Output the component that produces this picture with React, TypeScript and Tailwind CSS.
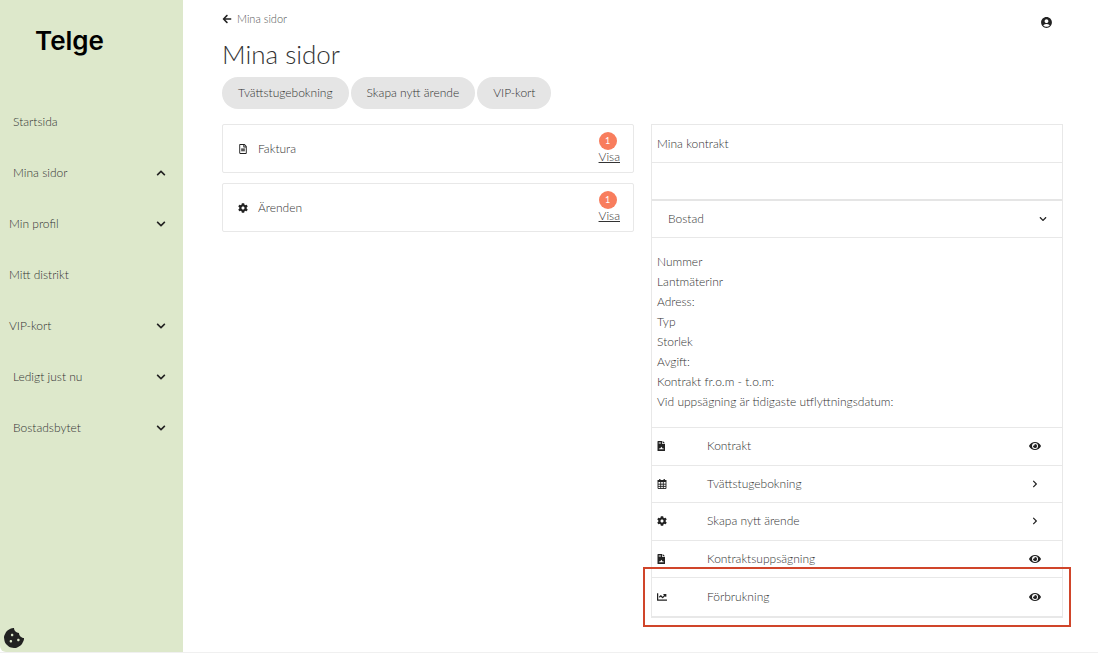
import {
  FaArrowLeft,
  FaChartLine,
  FaChevronDown,
  FaChevronRight,
  FaChevronUp,
  FaCog,
  FaCookieBite,
  FaEye,
  FaRegFileAlt,
} from 'react-icons/fa'
import { MdAccountCircle } from 'react-icons/md'
import type { ComponentType } from 'react'
import { clsx } from 'clsx'

type Icon = ComponentType<{ className?: string }>

interface NavItem {
  label: string
  indent?: boolean
  state?: 'open' | 'closed'
}

const navItems: NavItem[] = [
  { label: 'Startsida', indent: true },
  { label: 'Mina sidor', indent: true, state: 'open' },
  { label: 'Min profil', state: 'closed' },
  { label: 'Mitt distrikt' },
  { label: 'VIP-kort', state: 'closed' },
  { label: 'Ledigt just nu', indent: true, state: 'closed' },
  { label: 'Bostadsbytet', indent: true, state: 'closed' },
]

const shortcuts = ['Tvättstugebokning', 'Skapa nytt ärende', 'VIP-kort']

const details = [
  'Nummer',
  'Lantmäterinr',
  'Adress:',
  'Typ',
  'Storlek',
  'Avgift:',
  'Kontrakt fr.o.m - t.o.m:',
  'Vid uppsägning är tidigaste utflyttningsdatum:',
]

// Solid page with a folded corner, two text lines and a signature
function ContractIcon({ className }: { className?: string }) {
  return (
    <svg viewBox="0 0 10 10" fill="currentColor" className={className}>
      <path
        fillRule="evenodd"
        d="M.5 .6Q.5 0 1.1 0H5.1V2.9H8V9.4Q8 10 7.4 10H1.1Q.5 10 .5 9.4ZM1.7 1.2V1.8H3.9V1.2ZM1.7 2.5V3.1H3.9V2.5ZM1.9 8.2H6.7V7.5H5.5L4.5 5.8L3.1 7.5H1.9Z"
      />
      <path d="M5.7 0L8 2.3H5.7Z" />
    </svg>
  )
}

function CalendarIcon({ className }: { className?: string }) {
  return (
    <svg viewBox="0 0 10 10" fill="none" stroke="currentColor" className={className}>
      <path d="M.5 1H9.5V3H.5Z" fill="currentColor" stroke="none" />
      <path d="M2.8 0V2M7.2 0V2" strokeWidth="1.3" />
      <path d="M1 3V9.5H9V3M1 5.2H9M1 7.4H9M3.7 3V9.5M6.3 3V9.5" strokeWidth="0.9" />
    </svg>
  )
}

interface ActionRow {
  label: string
  icon: Icon
  action: 'view' | 'go'
}

const actionRows: ActionRow[] = [
  { label: 'Kontrakt', icon: ContractIcon, action: 'view' },
  { label: 'Tvättstugebokning', icon: CalendarIcon, action: 'go' },
  { label: 'Skapa nytt ärende', icon: FaCog, action: 'go' },
  { label: 'Kontraktsuppsägning', icon: ContractIcon, action: 'view' },
  { label: 'Förbrukning', icon: FaChartLine, action: 'view' },
]

function Sidebar() {
  return (
    <aside className="flex w-[183px] shrink-0 flex-col justify-between rounded-bl-md bg-[#dde8cb]">
      <div>
        <a href="#" className="flex h-24 items-start px-[35px] pt-[21px] font-['Inter'] text-[26px] leading-10 font-semibold text-black">
          Telge
        </a>
        <nav>
          {navItems.map(({ label, indent, state }) => (
            <a
              key={label}
              href="#"
              className={clsx('flex h-[51px] items-center justify-between pr-[17px]', indent ? 'pl-[13px]' : 'pl-[9px]')}
            >
              {label}
              {state === 'open' && <FaChevronUp className="size-[10px] text-[#222]" />}
              {state === 'closed' && <FaChevronDown className="size-[10px] text-[#222]" />}
            </a>
          ))}
        </nav>
      </div>
      <button aria-label="Cookies" className="mb-1 ml-1 size-5 text-[#222]">
        <FaCookieBite className="size-5" />
      </button>
    </aside>
  )
}

function SummaryCard({ icon: Icon, label, count }: { icon: Icon; label: string; count: number }) {
  return (
    <div className="flex h-[49px] items-center rounded-xs border border-[#e8e8e8] pr-[13px] pl-[14px]">
      <Icon className="h-[10px] w-3 text-[#222]" />
      <span className="ml-[9px] flex-1">{label}</span>
      <div className="flex flex-col pb-[2px]">
        <span className="flex size-[18px] items-center justify-center rounded-full bg-[#f87d5d] text-[9px] font-normal text-white">
          {count}
        </span>
        <a href="#" className="leading-[14px] underline">
          Visa
        </a>
      </div>
    </div>
  )
}

function ContractPanel() {
  return (
    <section className="border border-b-2 border-[#e8e8e8]">
      <h2 className="flex h-[38px] items-center border-b border-[#e8e8e8] px-[5px]">Mina kontrakt</h2>
      <div className="h-[38px] border-b-2 border-[#e5e5e5]" />
      <button className="flex h-[37px] w-full items-center justify-between border-b border-[#e8e8e8] pr-[15px] pl-4">
        Bostad
        <FaChevronDown className="size-2 text-[#222]" />
      </button>
      <ul className="border-b border-[#e8e8e8] px-[5px] pt-[14px] pb-[15px] leading-5">
        {details.map((text) => (
          <li key={text}>{text}</li>
        ))}
      </ul>
      <div className="grid h-[188px] grid-rows-5 divide-y divide-[#e8e8e8]">
        {actionRows.map(({ label, icon: Icon, action }, i) => (
          <button key={label} className="relative flex items-center pr-[21px] pl-[5px] text-left">
            <Icon className="size-[10px] text-[#222]" />
            <span className="ml-10 flex-1">{label}</span>
            <span className="flex w-3 justify-center text-[#222]">
              {action === 'view' ? <FaEye className="size-3" /> : <FaChevronRight className="size-2" />}
            </span>
            {i === actionRows.length - 1 && (
              <span className="pointer-events-none absolute -inset-x-[9px] -top-[11px] -bottom-[11px] border-2 border-[#d0452a]" />
            )}
          </button>
        ))}
      </div>
    </section>
  )
}

export default function App() {
  return (
    <div className="flex min-h-screen border-b border-[#f0f0f0] bg-white font-['Lato',sans-serif] text-xs font-light text-[#333]">
      <Sidebar />
      <main className="flex-1 pr-[35px] pl-[39px]">
        <header className="flex h-10 items-start justify-between pr-[10px]">
          <a href="#" className="flex items-center gap-[5px] pt-[11px] text-[11px] leading-4 text-[#555]">
            <FaArrowLeft className="size-[10px] text-[#222]" />
            Mina sidor
          </a>
          <button aria-label="Konto" className="pt-4 text-[#222]">
            <MdAccountCircle className="size-[13px]" />
          </button>
        </header>
        <h1 className="text-[26px] leading-7">Mina sidor</h1>
        <div className="mt-[9px] flex gap-[2px]">
          {shortcuts.map((label) => (
            <button key={label} className="h-8 rounded-full bg-[#e5e5e5] px-4">
              {label}
            </button>
          ))}
        </div>
        <div className="mt-[15px] grid grid-cols-2 items-start gap-[17px]">
          <div className="flex flex-col gap-[10px]">
            <SummaryCard icon={FaRegFileAlt} label="Faktura" count={1} />
            <SummaryCard icon={FaCog} label="Ärenden" count={1} />
          </div>
          <ContractPanel />
        </div>
      </main>
    </div>
  )
}
